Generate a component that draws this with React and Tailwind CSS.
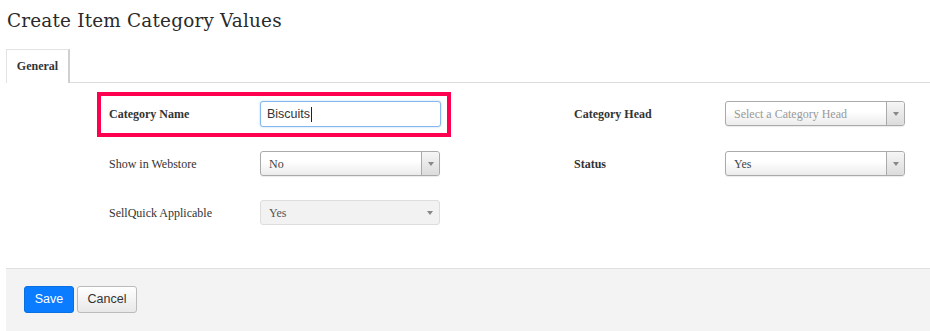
const serif = { fontFamily: '"Liberation Serif", "Times New Roman", serif' };

function Arrow({ sep = true }) {
    return (
        <div className={`flex w-[18px] items-center justify-center self-stretch rounded-r-[3px] ${sep ? "border-l border-[#aaa] bg-gradient-to-b from-[#f6f6f6] to-[#dcdcdc]" : ""}`}>
            <div className="h-0 w-0 border-x-[3px] border-t-[4px] border-x-transparent border-t-[#888]" />
        </div>
    );
}

function Select({ value, placeholder, width = "w-[180px]" }) {
    return (
        <div className={`flex h-[25px] ${width} items-center rounded-[3px] border border-[#aaa] bg-gradient-to-b from-white from-40% to-[#ececec] shadow-[0_1px_1px_rgba(0,0,0,0.08)]`}>
            <span className={`flex-1 pl-2 text-[12px] ${placeholder ? "text-[#999]" : "text-[#444]"}`} style={serif}>
                {value || placeholder}
            </span>
            <Arrow />
        </div>
    );
}

function DisabledSelect({ value }) {
    return (
        <div className="flex h-[25px] w-[180px] items-center rounded-[3px] border border-[#ddd] bg-[#f2f2f2]">
            <span className="flex-1 pl-2 text-[12px] text-[#555]" style={serif}>{value}</span>
            <Arrow sep={false} />
        </div>
    );
}

export default function App() {
    return (
        <div className="h-[331px] w-[930px] overflow-hidden bg-white pl-[6px]">
            <h1 className="pl-[1px] pt-[9px] text-[18.4px] leading-[24px] tracking-[0.2px] text-[#2a2a2a]" style={{ fontFamily: '"DejaVu Serif", serif' }}>
                Create Item Category Values
            </h1>

            <div className="mt-[16px] flex h-[34px] items-end">
                <div className="flex h-[34px] w-[64px] items-center justify-center border-l border-t border-r-2 border-[#e2e2e2] border-r-[#d0d0d0] bg-white pb-[1px] text-[12px] font-bold text-[#333]" style={serif}>
                    General
                </div>
                <div className="h-px flex-1 bg-[#dcdcdc]" />
            </div>

            <div className="ml-[91px] mt-[9px] flex gap-[123px]">
                <div className="w-[354px]">
                    <div className="flex h-[45px] items-center border-4 border-[#ff0050] pl-2 pb-[1px]">
                        <span className="w-[151px] text-[12px] font-bold text-[#333]" style={serif}>Category Name</span>
                        <div className="flex h-[26px] w-[181px] items-center rounded-[3px] border border-[#86b7ee] bg-white pl-[6px] text-[12.5px] text-[#333] shadow-[0_0_2px_rgba(82,168,236,0.5)]" style={{ fontFamily: '"Liberation Sans", Arial, sans-serif' }}>
                            Biscuits<span className="ml-px h-[15px] w-px bg-[#222]" />
                        </div>
                    </div>
                    <div className="mt-[14px] flex items-center pl-3">
                        <span className="w-[151px] text-[12px] text-[#333]" style={serif}>Show in Webstore</span>
                        <Select value="No" />
                    </div>
                    <div className="mt-[24px] flex items-center pl-3">
                        <span className="w-[151px] text-[12px] text-[#333]" style={serif}>SellQuick Applicable</span>
                        <DisabledSelect value="Yes" />
                    </div>
                </div>

                <div className="pt-[9px]">
                    <div className="flex items-center">
                        <span className="w-[151px] text-[12px] font-bold text-[#333]" style={serif}>Category Head</span>
                        <Select placeholder="Select a Category Head" />
                    </div>
                    <div className="mt-[25px] flex items-center">
                        <span className="w-[151px] text-[12px] font-bold text-[#333]" style={serif}>Status</span>
                        <Select value="Yes" />
                    </div>
                </div>
            </div>

            <div className="mt-[43px] h-[70px] border-t border-[#e0e0e0] bg-[#f3f3f3] pl-[18px] pt-[17px]">
                <div className="flex gap-[3px] text-[12.5px]" style={{ fontFamily: '"Liberation Sans", Arial, sans-serif' }}>
                    <button className="h-[27px] w-[50px] rounded-[3px] border border-[#0a6fe0] bg-[#0a7cff] text-white">Save</button>
                    <button className="h-[27px] w-[60px] rounded-[3px] border border-[#bbb] bg-gradient-to-b from-white to-[#e8e8e8] text-[#333]">Cancel</button>
                </div>
            </div>
        </div>
    );
}
